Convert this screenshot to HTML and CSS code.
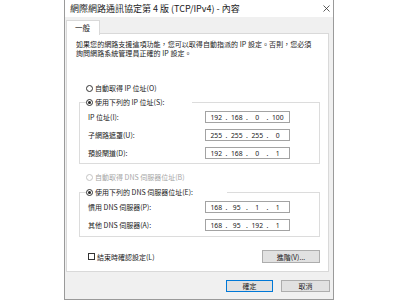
FILE: index.html
```html
<!DOCTYPE html>
<html lang="zh-Hant">
<head>
<meta charset="utf-8">
<title>TCP/IPv4</title>
<link rel="stylesheet" href="styles.css">
</head>
<body>
<div class="window">
  <div class="titlebar">
    <span class="title">網際網路通訊協定第 4 版 (TCP/IPv4) - 內容</span>
    <svg class="close" width="7" height="7" viewBox="0 0 7 7"><path d="M0.5 0.5 L6.5 6.5 M6.5 0.5 L0.5 6.5" stroke="#333" stroke-width="0.8" fill="none"/></svg>
  </div>
  <div class="body">
    <div class="tabs"><div class="tab">一般</div></div>
    <div class="panel">
      <p class="desc">如果您的網路支援這項功能，您可以取得自動指派的 IP 設定。否則，您必須<br>詢問網路系統管理員正確的 IP 設定。</p>

      <div class="opt opt-first"><span class="radio"></span><span>自動取得 IP 位址(O)</span></div>
      <fieldset class="group group-ip">
        <legend class="legend legend-ip"><span class="radio on"></span><span>使用下列的 IP 位址(S):</span></legend>
        <div class="row"><span class="lbl">IP 位址(I):</span><span class="ip"><span class="f">192</span><span class="d">.</span><span class="f">168</span><span class="d">.</span><span class="f">0</span><span class="d">.</span><span class="f">100</span></span></div>
        <div class="row"><span class="lbl">子網路遮罩(U):</span><span class="ip"><span class="f">255</span><span class="d">.</span><span class="f">255</span><span class="d">.</span><span class="f">255</span><span class="d">.</span><span class="f">0</span></span></div>
        <div class="row"><span class="lbl">預設閘道(D):</span><span class="ip"><span class="f">192</span><span class="d">.</span><span class="f">168</span><span class="d">.</span><span class="f">0</span><span class="d">.</span><span class="f">1</span></span></div>
      </fieldset>

      <div class="opt opt-dns disabled"><span class="radio"></span><span>自動取得 DNS 伺服器位址(B)</span></div>
      <fieldset class="group group-dns">
        <legend class="legend legend-dns"><span class="radio on"></span><span>使用下列的 DNS 伺服器位址(E):</span></legend>
        <div class="row"><span class="lbl">慣用 DNS 伺服器(P):</span><span class="ip"><span class="f">168</span><span class="d">.</span><span class="f">95</span><span class="d">.</span><span class="f">1</span><span class="d">.</span><span class="f">1</span></span></div>
        <div class="row"><span class="lbl">其他 DNS 伺服器(A):</span><span class="ip"><span class="f">168</span><span class="d">.</span><span class="f">95</span><span class="d">.</span><span class="f">192</span><span class="d">.</span><span class="f">1</span></span></div>
      </fieldset>

      <div class="bottom-row">
        <div class="check-opt"><span class="checkbox"></span><span>結束時確認設定(L)</span></div>
        <div class="btn btn-adv">進階(V)...</div>
      </div>
    </div>
    <div class="actions">
      <div class="btn btn-default">確定</div>
      <div class="btn">取消</div>
    </div>
  </div>
</div>
</body>
</html>
```

FILE: styles.css
```css
html, body {
  margin: 0;
  padding: 0;
  background: #ffffff;
}

body {
  font-family: "Noto Sans CJK TC", "Noto Sans", sans-serif;
  color: #1a1a1a;
  font-size: 7px;
}

.window {
  margin-left: 64px;
  width: 270px;
  height: 300px;
  box-sizing: border-box;
  border: 1px solid #9a9a9a;
  border-top: none;
  background: #f0f0f0;
  display: flex;
  flex-direction: column;
}

.titlebar {
  height: 17px;
  background: #ffffff;
  display: flex;
  align-items: center;
  justify-content: space-between;
  padding: 0 3px 0 5px;
  flex: none;
}

.title {
  font-size: 9px;
  line-height: 17px;
  color: #222;
  white-space: nowrap;
}

.close {
  display: block;
  margin-right: 0;
}

.body {
  padding: 3px 4px 0 1px;
  display: flex;
  flex-direction: column;
}

.tabs {
  display: flex;
  height: 14px;
  margin-bottom: -1px;
  position: relative;
  z-index: 1;
}

.tab {
  width: 34px;
  box-sizing: border-box;
  border: 1px solid #d9d9d9;
  border-bottom: none;
  background: #ffffff;
  font-size: 7.5px;
  line-height: 13px;
  padding-left: 8px;
  height: 15px;
}

.panel {
  width: 263px;
  box-sizing: border-box;
  background: #ffffff;
  border: 1px solid #d9d9d9;
  padding: 6px 8px 8px 9px;
}

.desc {
  margin: 0;
  line-height: 9px;
  font-size: 7px;
  white-space: nowrap;
  letter-spacing: 0.05px;
}

.opt {
  display: flex;
  align-items: center;
  height: 12px;
  margin-left: 10px;
  white-space: nowrap;
}

.opt-first { margin-top: 24px; }
.opt-dns { margin-top: 7px; }

.disabled { color: #a6a6a6; }
.disabled .radio { border-color: #c4c4c4; }

.radio {
  width: 7px;
  height: 7px;
  box-sizing: border-box;
  border: 1px solid #333;
  border-radius: 50%;
  margin-right: 2px;
  flex: none;
  display: flex;
  align-items: center;
  justify-content: center;
  background: #fff;
}

.radio.on::after {
  content: "";
  width: 3px;
  height: 3px;
  border-radius: 50%;
  background: #222;
}

.group {
  margin: 2px 0 0 3px;
  width: 241px;
  box-sizing: border-box;
  border: 1px solid #dcdcdc;
  padding: 3px 29px 4px 6px;
  min-inline-size: 0;
}

.group-dns {
  margin-top: 3px;
  padding-bottom: 5px;
}

.legend {
  padding: 0;
  height: 12px;
  display: flex;
  align-items: center;
  white-space: nowrap;
}

.legend-ip { width: 106px; }
.legend-dns { width: 141px; }

.row {
  display: flex;
  align-items: center;
  justify-content: space-between;
  height: 12px;
  margin-left: 2px;
}

.row + .row { margin-top: 6px; }

.lbl { white-space: nowrap; }

.ip {
  width: 85px;
  height: 12px;
  box-sizing: border-box;
  border: 1px solid #a3a3a3;
  background: #fff;
  display: flex;
  align-items: center;
  padding-left: 2px;
  font-family: "Noto Sans", sans-serif;
  font-size: 6.8px;
  color: #222;
}

.ip .f {
  width: 16.5px;
  text-align: center;
}

.ip .d {
  width: 4px;
  text-align: center;
}

.bottom-row {
  margin-top: 13px;
  display: flex;
  align-items: center;
  justify-content: space-between;
}

.check-opt {
  display: flex;
  align-items: center;
  margin-left: 12px;
  white-space: nowrap;
}

.checkbox {
  width: 7px;
  height: 7px;
  box-sizing: border-box;
  border: 1px solid #333;
  background: #fff;
  margin-right: 2px;
}

.btn {
  height: 12px;
  width: 49px;
  box-sizing: border-box;
  border: 1px solid #adadad;
  background: #e1e1e1;
  display: flex;
  align-items: center;
  justify-content: center;
  font-size: 7px;
  white-space: nowrap;
}

.btn-adv {
  width: 58px;
  height: 13px;
}

.btn-default {
  border-color: #0078d7;
  width: 47px;
}

.actions {
  margin-top: 8px;
  display: flex;
  justify-content: flex-end;
  gap: 8px;
  padding-right: 0;
  margin-right: -1px;
}
```
